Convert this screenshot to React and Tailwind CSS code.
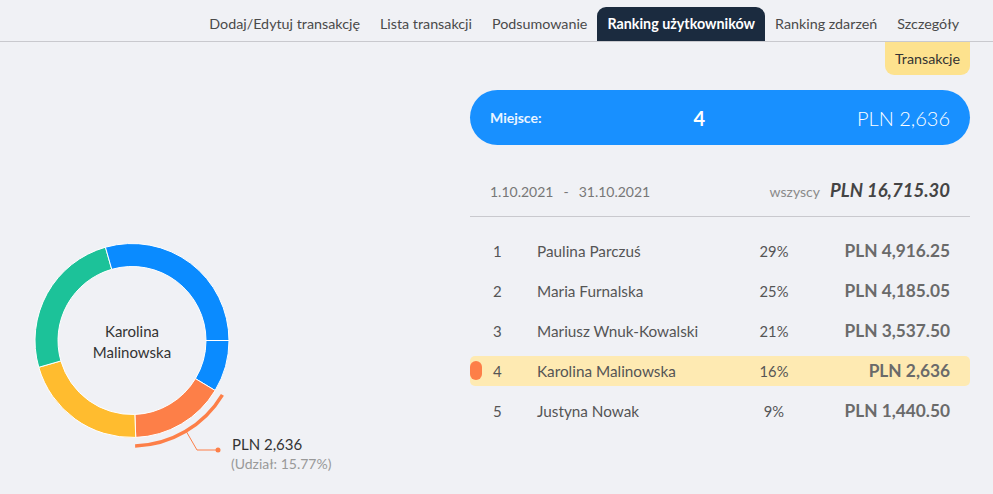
import React from "react";

const CX = 132;
const CY = 110.5;
const RO = 97;
const RI = 74;

function pt(a, r) {
  const rad = (a * Math.PI) / 180;
  return [CX + r * Math.sin(rad), CY - r * Math.cos(rad)];
}

function seg(a0, a1) {
  const large = a1 - a0 > 180 ? 1 : 0;
  const [x0, y0] = pt(a0, RO);
  const [x1, y1] = pt(a1, RO);
  const [x2, y2] = pt(a1, RI);
  const [x3, y3] = pt(a0, RI);
  return `M${x0} ${y0} A${RO} ${RO} 0 ${large} 1 ${x1} ${y1} L${x2} ${y2} A${RI} ${RI} 0 ${large} 0 ${x3} ${y3} Z`;
}

function arc(a0, a1, r) {
  const [x0, y0] = pt(a0, r);
  const [x1, y1] = pt(a1, r);
  return `M${x0} ${y0} A${r} ${r} 0 0 1 ${x1} ${y1}`;
}

const BLUE = "#0a8bff";
const GREEN = "#1cc299";
const YELLOW = "#ffbc2f";
const ORANGE = "#fd7f48";

const segments = [
  { a0: 90, a1: 121.02, c: BLUE },
  { a0: 121.02, a1: 177.79, c: ORANGE },
  { a0: 177.79, a1: 253.98, c: YELLOW },
  { a0: 253.98, a1: 344.11, c: GREEN },
  { a0: 344.11, a1: 450, c: BLUE },
];

const rows = [
  { n: 1, name: "Paulina Parczuś", p: "29%", v: "PLN 4,916.25" },
  { n: 2, name: "Maria Furnalska", p: "25%", v: "PLN 4,185.05" },
  { n: 3, name: "Mariusz Wnuk-Kowalski", p: "21%", v: "PLN 3,537.50" },
  { n: 4, name: "Karolina Malinowska", p: "16%", v: "PLN 2,636", hl: true },
  { n: 5, name: "Justyna Nowak", p: "9%", v: "PLN 1,440.50" },
];

const tabs = [
  "Dodaj/Edytuj transakcję",
  "Lista transakcji",
  "Podsumowanie",
  "Ranking użytkowników",
  "Ranking zdarzeń",
  "Szczegóły",
];

export default function App() {
  return (
    <div
      className="w-[993px] h-[494px] bg-[#f0f1f5] overflow-hidden text-[#4a4a4a]"
      style={{ fontFamily: "Lato, 'Open Sans', sans-serif" }}
    >
      <div className="flex justify-end pr-[24px] pt-[7px] border-b border-[#c9c9ce]">
        {tabs.map((t, i) =>
          i === 3 ? (
            <div
              key={t}
              className="h-[34px] px-[10px] flex items-center text-[14.3px] font-bold text-white bg-[#1b2b3f] rounded-t-[9px]"
            >
              {t}
            </div>
          ) : (
            <div key={t} className="h-[34px] px-[10px] flex items-center text-[14.3px] text-[#4a4a4a]">
              {t}
            </div>
          )
        )}
      </div>

      <div className="flex">
        <div className="flex-1">
          <svg width="360" height="252" className="mt-[188px] block">
            {segments.map((s, i) => (
              <path key={i} d={seg(s.a0, s.a1)} fill={s.c} stroke="#ffffff" strokeWidth="1" />
            ))}
            <path d={arc(121.02, 178.3, 105.5)} fill="none" stroke={ORANGE} strokeWidth="3.5" />
            <polyline
              points="186,201 197,220 218,220"
              fill="none"
              stroke={ORANGE}
              strokeWidth="1"
            />
            <circle cx="218" cy="220" r="2.5" fill={ORANGE} />
            <text x={CX} y="107" textAnchor="middle" fontSize="15" fill="#333">
              Karolina
            </text>
            <text x={CX} y="128" textAnchor="middle" fontSize="15" fill="#333">
              Malinowska
            </text>
            <text x="232" y="220" fontSize="15" fill="#333">
              PLN 2,636
            </text>
            <text x="231" y="239" fontSize="14" fill="#999">
              (Udział: 15.77%)
            </text>
          </svg>
        </div>

        <div className="w-[500px] mr-[23px] flex flex-col">
          <div className="self-end h-[33px] px-[10px] flex items-center bg-[#fde28e] rounded-b-[9px] text-[14.3px] text-[#333]">
            Transakcje
          </div>

          <div className="mt-[15px] h-[55px] rounded-full bg-[#1890ff] px-[20px] flex items-center justify-between text-white">
            <span className="text-[14px] font-bold text-[#eaf4ff]">Miejsce:</span>
            <span className="text-[20px] font-bold">4</span>
            <span className="text-[20px] font-light">PLN 2,636</span>
          </div>

          <div className="mt-[26px] h-[40px] px-[20px] flex items-center justify-between">
            <div className="flex gap-[10px] text-[14px] text-[#777]">
              <span>1.10.2021</span>
              <span>-</span>
              <span>31.10.2021</span>
            </div>
            <div className="flex items-baseline gap-[10px]">
              <span className="text-[14px] text-[#8a8a8a]">wszyscy</span>
              <span className="text-[18.5px] font-bold italic text-[#444]">PLN 16,715.30</span>
            </div>
          </div>
          <div className="mt-[5px] h-px bg-[#c9c9ce]" />

          <div className="mt-[19px] flex flex-col gap-[10px]">
            {rows.map((r) => (
              <div
                key={r.n}
                className={
                  "relative h-[30px] px-[20px] flex items-center rounded-[5px] " +
                  (r.hl ? "bg-[#feeab2]" : "")
                }
              >
                {r.hl && (
                  <div className="absolute left-0 top-[5px] w-[12px] h-[19px] rounded-full bg-[#fd7f48]" />
                )}
                <span className="w-[47px] pl-[3px] text-[15px] text-[#555]">{r.n}</span>
                <span className="flex-1 text-[15.3px] text-[#555]">{r.name}</span>
                <span className="w-[60px] text-center text-[14.7px] text-[#555]">{r.p}</span>
                <span className="w-[146px] text-right text-[17.3px] font-bold text-[#6a6a6a]">{r.v}</span>
              </div>
            ))}
          </div>
        </div>
      </div>
    </div>
  );
}
